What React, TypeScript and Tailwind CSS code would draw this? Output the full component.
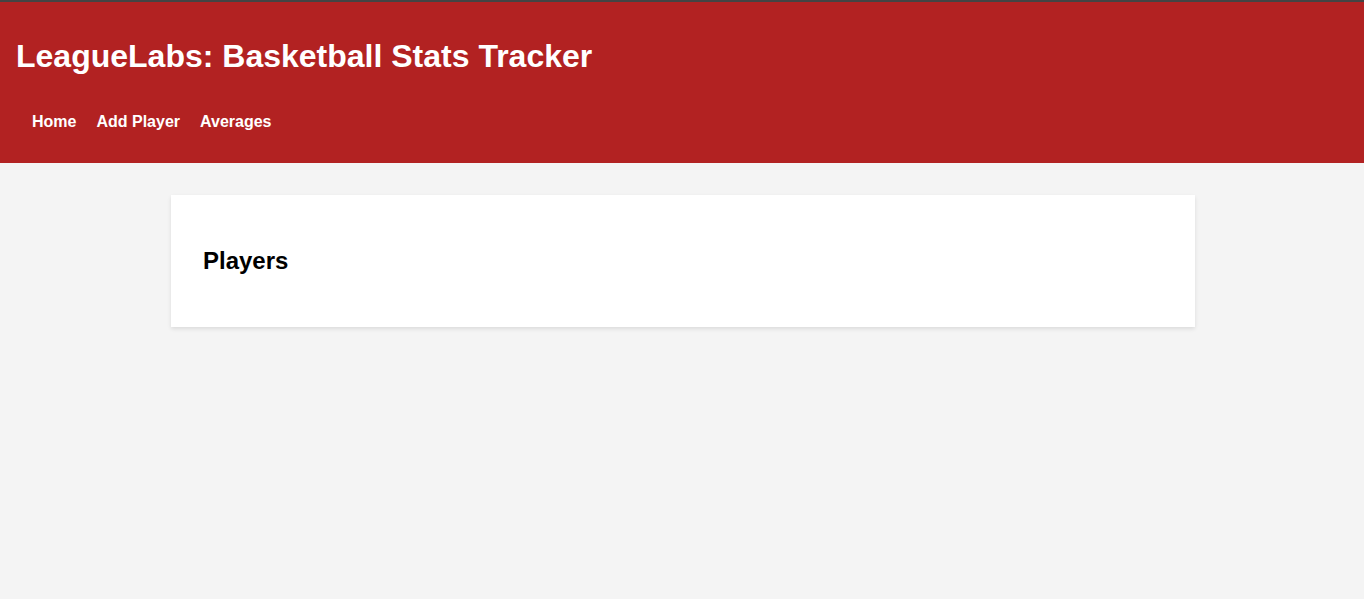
const links = ["Home", "Add Player", "Averages"]

export default function App() {
  return (
    <div className="min-h-[599px] bg-[#f4f4f4] font-['Liberation_Sans',Arial,sans-serif]">
      <header className="border-t-2 border-[#444444] bg-[#b22222] px-4 pt-[36px] pb-[32px] text-white">
        <h1 className="text-[32px] leading-[37px] font-bold">LeagueLabs: Basketball Stats Tracker</h1>
        <nav className="mt-[38px] flex gap-5 pl-4 text-base leading-[18px] font-bold">
          {links.map((l) => (
            <a key={l} href="#" className="text-white">
              {l}
            </a>
          ))}
        </nav>
      </header>
      <main className="pt-8 pr-4 pl-[18px]">
        <section className="mx-auto max-w-[1024px] bg-white p-8 shadow-[0_2px_4px_rgba(0,0,0,0.1)]">
          <h2 className="my-5 text-2xl leading-[28px] font-bold text-black">Players</h2>
        </section>
      </main>
    </div>
  )
}
